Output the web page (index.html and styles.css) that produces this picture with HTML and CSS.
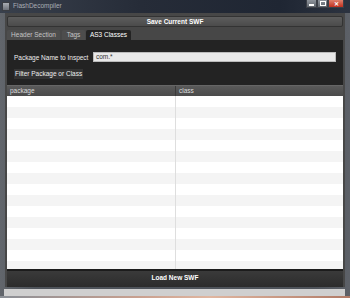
FILE: index.html
```html
<!DOCTYPE html>
<html lang="en">

<head>
    <meta charset="UTF-8">
    <title>FlashDecompiler</title>
    <link rel="stylesheet" href="styles.css">
</head>

<body>
    <div class="window">
        <div class="titlebar">
            <span class="app_icon"></span>
            <span class="title">FlashDecompiler</span>
            <div class="controls">
                <span class="ctl ctl_min"><i></i></span>
                <span class="ctl ctl_max"><i></i></span>
                <span class="ctl ctl_close">&#x2715;</span>
            </div>
        </div>

        <div class="app">
            <div class="btn save_btn">Save Current SWF</div>

            <div class="tabs">
                <div class="tab tab_header">Header Section</div>
                <div class="tab tab_tags">Tags</div>
                <div class="tab tab_as3 active">AS3 Classes</div>
            </div>

            <div class="panel">
                <div class="form">
                    <div class="form_row">
                        <span class="label">Package Name to Inspect</span>
                        <div class="input">com.*</div>
                    </div>
                    <div class="filter_btn">Filter Package or Class</div>
                </div>

                <div class="grid">
                    <div class="grid_head">
                        <div class="col col_pkg">package</div>
                        <div class="col col_cls">class</div>
                    </div>
                    <div class="grid_body" id="grid_body"></div>
                </div>

                <div class="load_btn">Load New SWF</div>
            </div>
        </div>

        <div class="statusbar"></div>
    </div>
    <div class="desktop"></div>

    <script>
        let body = document.getElementById("grid_body")
        for (let i = 0; i < 16; i++) {
            let row = document.createElement("div")
            row.className = i % 2 == 0 ? "row" : "row alt"
            row.innerHTML = '<div class="cell cell_pkg"></div><div class="cell"></div>'
            body.appendChild(row)
        }
    </script>
</body>

</html>
```

FILE: styles.css
```css
body {
    margin: 0;
    width: 350px;
    height: 298px;
    overflow: hidden;
    background: #6b5b55;
    font-family: "Liberation Sans", Arial, sans-serif;
}

.window {
    height: 296px;
    display: flex;
    flex-direction: column;
    background: linear-gradient(to right, #62666c, #4e535a 10%, #4e535a 90%, #5d6168);
}

.titlebar {
    height: 13px;
    display: flex;
    align-items: flex-start;
    background: linear-gradient(to right, #39404c, #262c38 40%, #1f2633 80%, #2c3340);
    padding-left: 2px;
}

.app_icon {
    width: 6px;
    height: 7px;
    margin-top: 2px;
    background: linear-gradient(#a8acb2, #6d7178);
    border: 1px solid #3a3d42;
}

.title {
    margin-left: 3px;
    margin-top: 2px;
    font-size: 6.5px;
    color: #a9adb4;
}

.controls {
    margin-left: auto;
    margin-right: 6px;
    display: flex;
    height: 8px;
}

.ctl {
    height: 8px;
    border: 1px solid #3c4048;
    border-top: none;
    box-sizing: border-box;
    display: flex;
    align-items: center;
    justify-content: center;
}

.ctl_min, .ctl_max {
    width: 11px;
    background: linear-gradient(#8d939b, #5f656d);
}

.ctl_min i {
    width: 5px;
    height: 2px;
    margin-top: 2px;
    background: #fff;
}

.ctl_max i {
    width: 4px;
    height: 3px;
    border: 1px solid #fff;
}

.ctl_close {
    width: 16px;
    background: linear-gradient(#e0806c, #c1301e);
    color: #fff;
    font-size: 6px;
    font-weight: bold;
}

.app {
    flex: 1;
    margin: 0 5px;
    padding: 3px 2px 0;
    background: #474747;
    display: flex;
    flex-direction: column;
}

.btn {
    border: 1px solid #333;
    border-radius: 2px;
    box-sizing: border-box;
    background: linear-gradient(#5d5d5d, #4b4b4b);
    color: #fff;
    font-size: 6.5px;
    font-weight: bold;
    text-align: center;
}

.save_btn {
    height: 11px;
    line-height: 10px;
    margin-bottom: 3px;
}

.tabs {
    height: 10px;
    display: flex;
}

.tab {
    background: #4d4d4d;
    color: #c4c4c4;
    font-size: 6.5px;
    line-height: 10px;
    text-align: center;
    white-space: nowrap;
    border-radius: 2px 2px 0 0;
}

.tab_header {
    width: 53px;
}

.tab_tags {
    width: 23px;
    margin-left: 2px;
}

.tab_as3 {
    width: 45px;
    margin-left: 1px;
}

.tab.active {
    background: #232323;
    color: #fff;
}

.panel {
    flex: 1;
    background: #232323;
    display: flex;
    flex-direction: column;
}

.form {
    height: 45px;
    box-sizing: border-box;
    padding: 12px 7px 0 7px;
}

.form_row {
    display: flex;
    align-items: center;
    height: 10px;
}

.label {
    width: 79px;
    color: #eee;
    font-size: 6.5px;
}

.input {
    flex: 1;
    height: 10px;
    box-sizing: border-box;
    background: #e8e8e8;
    border: 1px solid #bbb;
    color: #333;
    font-size: 6.5px;
    line-height: 8px;
    padding-left: 2px;
}

.filter_btn {
    display: inline-block;
    margin-top: 3px;
    height: 10px;
    padding: 0 1px;
    background: #333;
    color: #eee;
    font-size: 6.5px;
    line-height: 10px;
}

.grid {
    height: 184px;
    display: flex;
    flex-direction: column;
    overflow: hidden;
}

.grid_head {
    height: 11px;
    flex-shrink: 0;
    display: flex;
    background: linear-gradient(#5a5a5a, #4a4a4a);
    border-top: 1px solid #666;
    box-sizing: border-box;
}

.col {
    color: #ddd;
    font-size: 6.5px;
    line-height: 10px;
    padding-left: 3px;
}

.col_pkg {
    width: 165px;
    border-right: 1px solid #3a3a3a;
}

.grid_body {
    flex: 1;
    overflow: hidden;
    background: #fff;
}

.row {
    height: 11px;
    display: flex;
    background: #fff;
}

.row.alt {
    background: #f4f4f4;
}

.cell {
    flex: 1;
}

.cell_pkg {
    flex: none;
    width: 168px;
    border-right: 1px solid #dedede;
}

.load_btn {
    height: 18px;
    box-sizing: border-box;
    border-top: 2px solid #1c1c1c;
    background: linear-gradient(#3a3a3a, #2c2c2c);
    color: #fff;
    font-size: 6.5px;
    font-weight: bold;
    text-align: center;
    line-height: 14px;
}

.statusbar {
    height: 7px;
    margin: 2px 5px 0 4px;
    background: #cfcfcf;
}

.desktop {
    height: 2px;
    background: linear-gradient(to right, #8a8f96, #c9a08f 40%, #e0b6a0 60%, #b07a66);
}
```
